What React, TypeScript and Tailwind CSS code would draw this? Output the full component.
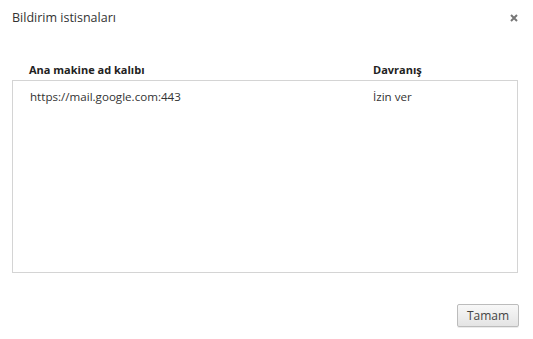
import React from "react";

export default function App() {
  return (
    <div className="w-[533px] h-[339px] bg-white flex flex-col text-[#333] font-['Open_Sans',_'Noto_Sans',_sans-serif]">
      <div className="flex justify-between items-start pl-3 pr-[15px] pt-[8px]">
        <div className="text-[12.5px] leading-[20px] text-[#333]">Bildirim istisnaları</div>
        <button className="mt-[6px] w-[8px] h-[8px] flex items-center justify-center">
          <svg width="8" height="8" viewBox="0 0 8 8">
            <path d="M1 1 L7 7 M7 1 L1 7" stroke="#777" strokeWidth="2" strokeLinecap="butt" />
          </svg>
        </button>
      </div>
      <div className="pl-3 pr-[15px] mt-[34px]">
        <div className="flex text-[11px] leading-[16px] font-bold text-[#222] pb-[2px]">
          <div className="pl-[17px] w-[361px]">Ana makine ad kalıbı</div>
          <div>Davranış</div>
        </div>
        <div className="h-[193px] border border-[#d4d4d4]">
          <div className="flex text-[11.6px] leading-[16px] pt-[8px] text-[#333]">
            <div className="pl-[17px] w-[360px]">https://mail.google.com:443</div>
            <div>İzin ver</div>
          </div>
        </div>
      </div>
      <div className="flex justify-end pr-[14px] mt-[31px]">
        <button className="w-[62px] h-[23px] rounded-[2px] border border-[#bcbcbc] bg-gradient-to-b from-[#f8f8f8] to-[#e4e4e4] shadow-[0_1px_0_rgba(0,0,0,0.08)] text-[12px] leading-[16px] text-[#444]">
          Tamam
        </button>
      </div>
    </div>
  );
}
